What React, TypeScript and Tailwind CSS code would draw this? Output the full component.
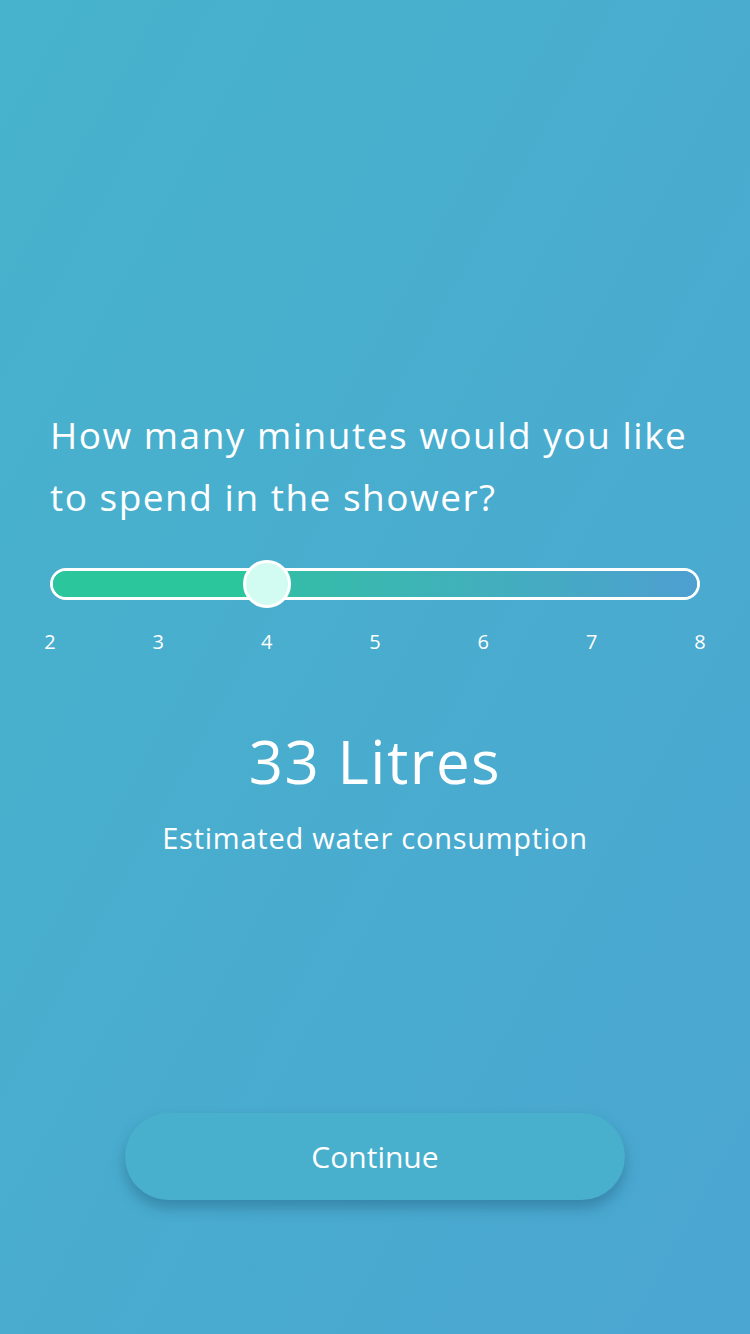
import React from 'react';

const TICKS = [2, 3, 4, 5, 6, 7, 8];

function MinutesSlider({ value }: { value: number }) {
  const pct = ((value - 2) / 6) * 100;
  return (
    <div className="px-[50px]">
      <div className="relative h-[32px]">
        <div className="flex h-full overflow-hidden rounded-full border-[3px] border-white">
          <div className="h-full bg-[#2bc69c]" style={{ width: `${pct}%` }} />
          <div className="h-full flex-1 bg-gradient-to-r from-[#33bea6] to-[#4d9fd0]" />
        </div>
        <div
          className="absolute top-1/2 h-[48px] w-[48px] -translate-x-1/2 -translate-y-1/2 rounded-full border-[3px] border-white bg-[#d2fbf2]"
          style={{ left: `${pct}%` }}
        />
      </div>
    </div>
  );
}

export default function App() {
  return (
    <div
      className="flex min-h-[1334px] w-full flex-col bg-gradient-to-br from-[#47b3cc] to-[#4ba6d1] text-white"
      style={{ fontFamily: '"Open Sans", Lato, sans-serif' }}
    >
      <h1 className="mt-[404px] px-[50px] text-[37px] font-normal leading-[62px] tracking-[1.5px]">
        How many minutes would you like to spend in the shower?
      </h1>

      <div className="mt-[40px]">
        <MinutesSlider value={4} />
        <div className="mt-[30px] flex justify-between px-[40px]">
          {TICKS.map((t) => (
            <span key={t} className="w-[20px] text-center text-[20px] leading-[24px]">
              {t}
            </span>
          ))}
        </div>
      </div>

      <div className="mt-[72px] flex flex-col items-center">
        <p className="text-[60px] leading-[70px] tracking-[1.5px]">33 Litres</p>
        <p className="mt-[24px] text-[29px] leading-[36px] tracking-[0.75px]">Estimated water consumption</p>
      </div>

      <div className="mt-auto mb-[134px] flex justify-center">
        <button
          type="button"
          className="h-[87px] w-[500px] rounded-full bg-[#48b0cd] text-[30px] shadow-[0_8px_14px_rgba(20,70,100,0.35)]"
        >
          Continue
        </button>
      </div>
    </div>
  );
}
